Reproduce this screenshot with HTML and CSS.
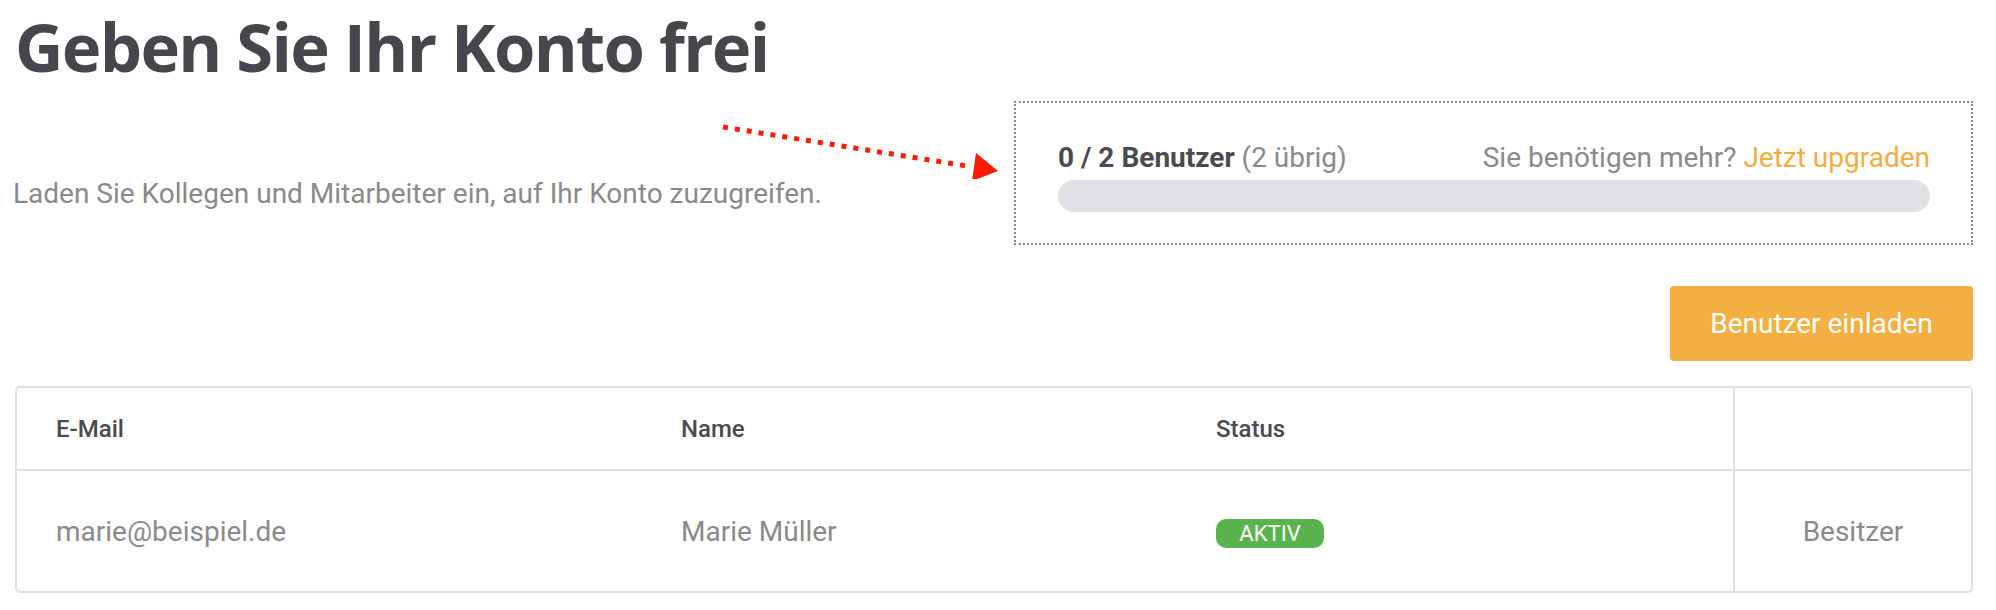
FILE: index.html
```html
<!DOCTYPE html>
<html lang="de">
<head>
<meta charset="utf-8">
<title>Konto freigeben</title>
<link rel="stylesheet" href="styles.css">
</head>
<body>
<div class="page">
  <h1 class="title">Geben Sie Ihr Konto frei</h1>

  <div class="intro">
    <p class="lead">Laden Sie Kollegen und Mitarbeiter ein, auf Ihr Konto zuzugreifen.</p>
    <div class="quota">
      <div class="quota-head">
        <span class="quota-count"><strong>0 / 2 Benutzer</strong> (2 übrig)</span>
        <span class="quota-more">Sie benötigen mehr? <a class="upgrade" href="#">Jetzt upgraden</a></span>
      </div>
      <div class="bar"></div>
    </div>
  </div>

  <svg class="arrow" width="290" height="70" viewBox="0 0 290 70">
    <line x1="8" y1="18" x2="252" y2="57" stroke="#fe1a05" stroke-width="5" stroke-dasharray="5 7"/>
    <polygon points="261,44 283,62 257,72" fill="#fe1a05"/>
  </svg>

  <div class="actions">
    <button class="invite" type="button">Benutzer einladen</button>
  </div>

  <div class="table">
    <div class="row head">
      <div class="cell">E-Mail</div>
      <div class="cell">Name</div>
      <div class="cell">Status</div>
      <div class="cell last"></div>
    </div>
    <div class="row body">
      <div class="cell">marie@beispiel.de</div>
      <div class="cell">Marie Müller</div>
      <div class="cell"><span class="badge">AKTIV</span></div>
      <div class="cell last role">Besitzer</div>
    </div>
  </div>
</div>
</body>
</html>
```

FILE: styles.css
```css
* { box-sizing: border-box; }

html, body {
  margin: 0;
  padding: 0;
  background: #ffffff;
}

body {
  font-family: Roboto, "Liberation Sans", sans-serif;
  color: #8a8a8a;
}

.page {
  position: relative;
  width: 1996px;
  padding: 0 23px 0 15px;
}

.title {
  margin: 0;
  padding-top: 6px;
  font-family: "Open Sans", "Liberation Sans", sans-serif;
  font-weight: 700;
  font-size: 67px;
  line-height: 80px;
  color: #46464c;
  letter-spacing: -1.7px;
}

.intro {
  display: flex;
  align-items: flex-start;
  justify-content: space-between;
  margin-top: 15px;
}

.lead {
  margin: 76px 0 0 -2px;
  font-size: 28px;
  line-height: 33px;
  color: #8a8a8a;
}

.quota {
  width: 959px;
  border: 2px dotted #8c8c8c;
  padding: 38px 41px 31px 42px;
}

.quota-head {
  display: flex;
  justify-content: space-between;
  font-size: 28px;
  line-height: 33px;
  color: #8a8a8a;
}

.quota-count strong {
  font-weight: 700;
  color: #4a4a50;
}

.upgrade {
  color: #f2ad42;
  text-decoration: none;
}

.bar {
  margin-top: 6px;
  height: 32px;
  border-radius: 16px;
  background: #e1e0e5;
}

.arrow {
  position: absolute;
  left: 715px;
  top: 109px;
}

.actions {
  display: flex;
  justify-content: flex-end;
  margin-top: 41px;
}

.invite {
  width: 303px;
  height: 75px;
  border: 0;
  border-radius: 4px;
  background: #f2af42;
  color: #ffffff;
  font-family: Roboto, "Liberation Sans", sans-serif;
  font-size: 28px;
  padding: 0;
}

.table {
  margin-top: 25px;
  border: 2px solid #e1e0e5;
  border-radius: 5px;
}

.row {
  display: grid;
  grid-template-columns: 625px 535px 1fr 238px;
}

.row.head {
  height: 83px;
  border-bottom: 2px solid #e1e0e5;
}

.row.body {
  height: 120px;
}

.cell {
  display: flex;
  align-items: center;
  padding-left: 39px;
}

.head .cell {
  font-size: 24px;
  font-weight: 500;
  color: #4a4a50;
}

.body .cell {
  font-size: 28px;
  color: #8a8a8a;
}

.cell.last {
  border-left: 2px solid #e1e0e5;
  padding-left: 0;
  justify-content: center;
}

.badge {
  display: inline-block;
  min-width: 108px;
  height: 29px;
  padding: 0 20px;
  border-radius: 10px;
  background: #5bb34f;
  color: #ffffff;
  font-size: 22px;
  line-height: 29px;
  text-align: center;
  margin-top: 4px;
}
```
